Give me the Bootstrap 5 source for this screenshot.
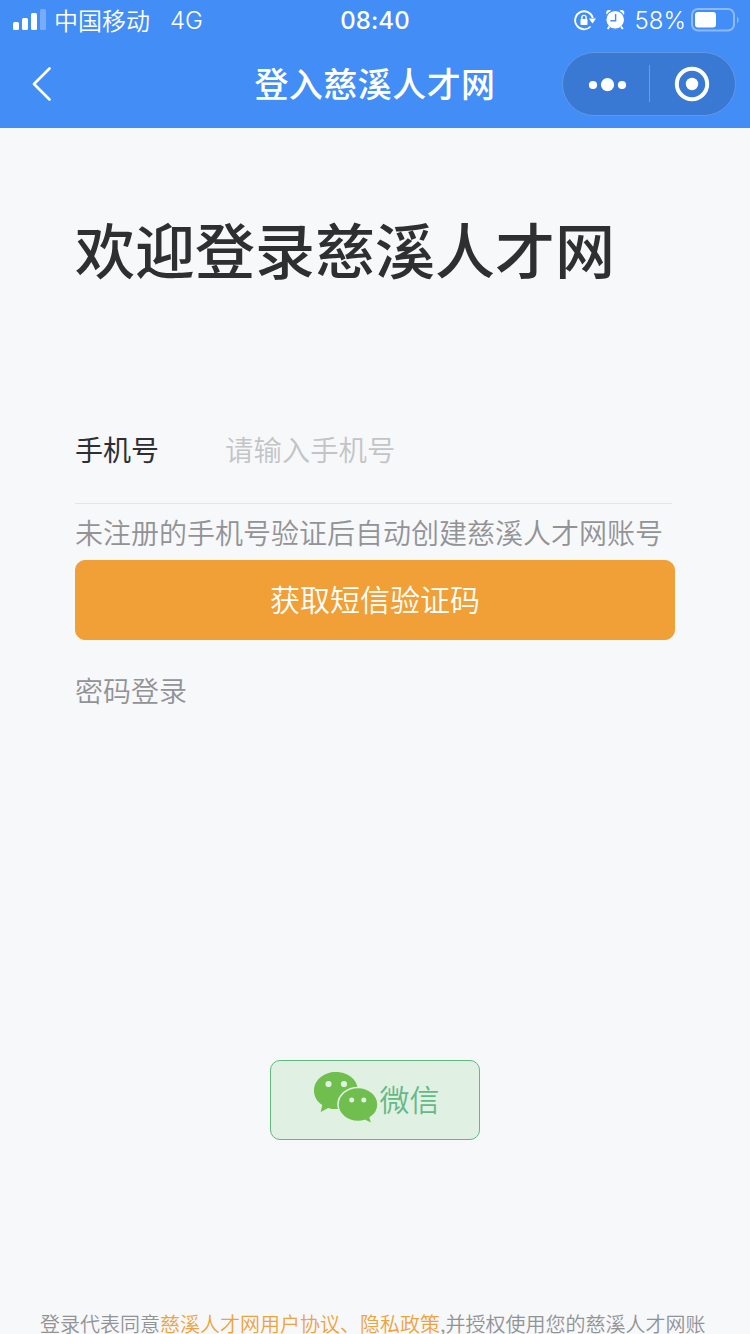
<!DOCTYPE html>
<html lang="zh-CN">
<head>
<meta charset="utf-8">
<meta name="viewport" content="width=device-width, initial-scale=1">
<title>登入慈溪人才网</title>
<link href="https://cdn.jsdelivr.net/npm/bootstrap@5.3.0/dist/css/bootstrap.min.css" rel="stylesheet">
<style>
  body { background: #f7f8fa; color: #2d2f31; font-family: "Noto Sans CJK SC", sans-serif; }
  .screen { width: 750px; height: 1334px; }
  .app-top { background: #438df6; height: 128px; }
  .app-top svg { display: block; }
  .status { height: 40px; font-size: 24px; line-height: 40px; }
  .latin { font-family: Inter, sans-serif; padding-top: 2px; line-height: 38px; }
  .clock { font-weight: 550; letter-spacing: .1px; }
  .demi { font-weight: 350; }
  .side { width: 250px; }
  .titlebar { height: 88px; }
  .page-title { font-size: 34px; font-weight: 500; letter-spacing: .45px; line-height: 58px; padding-bottom: 2px; }
  .capsule { width: 174px; height: 64px; border-radius: 32px; background: #3978d3; border: 1px solid #6198e3; margin-right: 14px; }
  .login { padding: 82px 75px 0; }
  .welcome { font-size: 60px; font-weight: 500; line-height: 76px; margin: 0 0 117px; }
  .phone-row { height: 101px; width: 597px; border-bottom: 1px solid #e4e5e8; font-size: 28px; padding-bottom: 8px; }
  .phone-row label { flex: 0 0 150px; }
  .phone-row .form-control { font-size: 28.4px; color: #2d2f31; line-height: 42px; }
  .phone-row .form-control::placeholder { color: #c3c4c6; font-weight: 350; opacity: 1; }
  .hint { font-size: 28px; line-height: 56px; height: 56px; color: #929395; font-weight: 350; }
  .password { margin-top: 22px; }
  .btn-code { --bs-btn-bg: #f0a037; --bs-btn-color: #fff; --bs-btn-border-color: #f0a037; --bs-btn-border-radius: 10px; height: 80px; font-size: 30px; font-weight: 350; }
  .btn-code span, .btn-wechat span { padding-bottom: 4px; }
  .btn-wechat { --bs-btn-bg: #e0f0e2; --bs-btn-color: #64b987; --bs-btn-border-color: #60ba7e; --bs-btn-border-radius: 10px; width: 210px; height: 80px; font-size: 30px; margin-top: 342px; font-weight: 350; }
  .btn-wechat svg { margin: 0 1px 6px 2px; }
  .terms { font-size: 20px; line-height: 30px; font-weight: 350; color: #929395; padding: 0 40px; margin-top: 169px; }
  .terms a { color: #eda33e; }
</style>
</head>
<body>
<div class="screen overflow-hidden">
  <header class="app-top text-white">
    <div class="status d-flex justify-content-between">
      <div class="side d-flex align-items-center">
        <svg class="ms-2" width="46" height="40" fill="#fff"><rect x="5" y="22" width="6" height="8" rx="1.5"/><rect x="14" y="18" width="6" height="12" rx="1.5"/><rect x="23" y="13" width="6" height="17" rx="1.5"/><rect x="32" y="9" width="6" height="21" rx="1.5" opacity=".28"/></svg>
        <span class="demi">中国移动</span>
        <span class="latin ms-3 ps-1 demi">4G</span>
      </div>
      <div class="latin clock">08:40</div>
      <div class="side d-flex align-items-center justify-content-end">
        <svg width="62" height="40" viewBox="0 0 62 40" fill="#fff">
          <path d="M17.6 26.500A9 9 0 1 1 19.800 18" fill="none" stroke="#fff" stroke-width="1.8"/>
          <path d="M15.8 18.500h7.200l-3.500 5z"/>
          <rect x="7.500" y="19" width="7" height="6" rx=".8"/><path d="M8.900 19.500v-2a2.100 2.100 0 0 1 4.200 0v2" fill="none" stroke="#fff" stroke-width="1.4"/>
          <circle cx="36" cy="12.800" r="2.800"/><circle cx="48.500" cy="12.800" r="2.800"/>
          <circle cx="42.200" cy="19.800" r="9.400" stroke="#438df6" stroke-width="1.200"/>
          <path d="M36.500 26.500l-1.800 2.500M48 26.500l1.800 2.500" stroke="#fff" stroke-width="2"/>
          <path d="M42.600 14v6.800h-5.200" fill="none" stroke="#438df6" stroke-width="1.4"/>
        </svg>
        <span class="latin demi">58%</span>
        <svg width="64" height="40" viewBox="0 0 64 40"><rect x="6" y="9" width="42" height="21.5" rx="6" fill="none" stroke="#8dbafa" stroke-width="2"/><rect x="9" y="12" width="21" height="15.5" rx="3" fill="#fff"/><path d="M51 16.500q3.500 3.500 0 7z" fill="#8dbafa"/></svg>
      </div>
    </div>
    <div class="titlebar d-flex justify-content-between align-items-center">
      <div class="side"><svg width="80" height="64" fill="none" stroke="#fff" stroke-width="2.7" stroke-linecap="round" stroke-linejoin="round"><path d="M49.5 16.5L34 32l15.500 15.500"/></svg></div>
      <h1 class="page-title m-0 text-nowrap">登入慈溪人才网</h1>
      <div class="side d-flex justify-content-end">
        <div class="capsule"><svg width="172" height="62" fill="#fff"><circle cx="30" cy="32" r="4.1"/><circle cx="44.5" cy="31.7" r="6.6"/><circle cx="59" cy="32" r="4.1"/><path d="M86.5 12v37" stroke="#6b9ce2"/><circle cx="129" cy="31" r="15.2" fill="none" stroke="#fff" stroke-width="4"/><circle cx="129" cy="31" r="6.2"/></svg></div>
      </div>
    </div>
  </header>
  <main class="login">
    <h2 class="welcome text-nowrap">欢迎登录慈溪人才网</h2>
    <div class="phone-row d-flex align-items-center">
      <label for="phone">手机号</label>
      <input id="phone" type="tel" class="form-control border-0 bg-transparent shadow-none p-0" placeholder="请输入手机号">
    </div>
    <div class="hint text-nowrap">未注册的手机号验证后自动创建慈溪人才网账号</div>
    <button type="button" class="btn btn-code w-100 d-flex align-items-center justify-content-center p-0"><span>获取短信验证码</span></button>
    <div class="hint password">密码登录</div>
    <button type="button" class="btn btn-wechat mx-auto d-flex align-items-center justify-content-center p-0">
      <svg width="66" height="56" viewBox="0 0 66 56" fill="#6fbe4e">
        <path d="M23 3C10.500 3 1 11.200 1 21.700c0 6 3.200 11 8.300 14.400L7.700 43l7.500-4.100c2.500.8 5 1.200 7.800 1.200 12.500 0 22-8.200 22-18.400S35.500 3 23 3z"/>
        <path d="M45 18.500c-11 0-20 7.600-20 17s9 17 20 17c2.400 0 4.700-.4 6.800-1.100l7.200 3.500-1.800-6.200c4.800-3 7.800-7.700 7.800-13.200 0-9.400-9-17-20-17z" stroke="#e0f0e2" stroke-width="1.600"/>
        <g fill="#e0f0e2"><circle cx="15.500" cy="15" r="3.100"/><circle cx="31" cy="15" r="3.100"/><circle cx="38.700" cy="31" r="2.500"/><circle cx="50.800" cy="31" r="2.500"/></g>
      </svg>
      <span>微信</span>
    </button>
  </main>
  <footer class="terms text-nowrap">登录代表同意<a href="#" class="text-decoration-none">慈溪人才网用户协议、隐私政策</a>,并授权使用您的慈溪人才网账</footer>
</div>
<script src="https://cdn.jsdelivr.net/npm/bootstrap@5.3.0/dist/js/bootstrap.bundle.min.js"></script>
</body>
</html>
